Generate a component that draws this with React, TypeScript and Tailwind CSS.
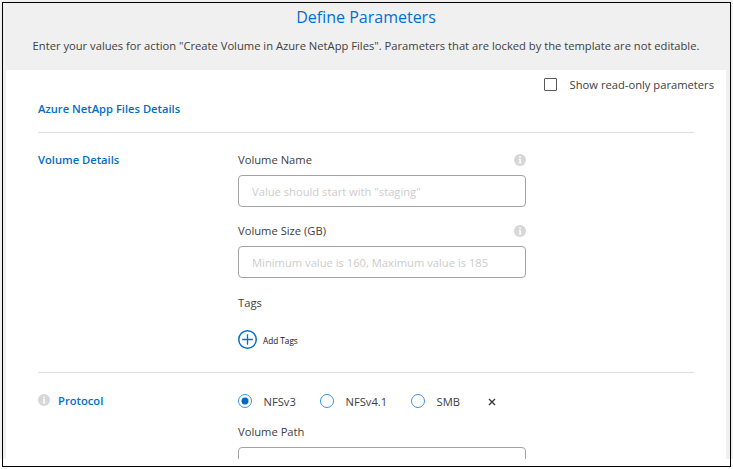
import React from "react";

function Info({ className = "" }: { className?: string }) {
  return (
    <svg className={`block h-3 w-3 shrink-0 ${className}`} viewBox="0 0 12 12">
      <circle cx="6" cy="6" r="6" fill="#d7d7d7" />
      <circle cx="6" cy="3.2" r="0.9" fill="#fff" />
      <path d="M4.9 5h1.9v3.5h.6v.9H4.7v-.9h.7V5.9h-.5z" fill="#fff" />
    </svg>
  );
}

function Field({ label, placeholder }: { label: string; placeholder: string }) {
  return (
    <div className="h-[71px] w-72">
      <div className="flex h-4 items-center justify-between">
        <label className="leading-4">{label}</label>
        <Info />
      </div>
      <input
        className="mt-[7px] block h-8 w-full rounded-[4px] border border-[#a3a3a3] bg-white px-[13px] pt-px text-[11.2px] outline-none placeholder:text-[#cccccc] placeholder:opacity-100"
        placeholder={placeholder}
      />
    </div>
  );
}

function Radio({ label, checked = false, className }: { label: string; checked?: boolean; className: string }) {
  return (
    <div className={`flex shrink-0 ${className}`}>
      <svg className="block h-3.5 w-3.5 shrink-0" viewBox="0 0 14 14">
        <circle cx="7" cy="7" r="6.5" fill="#fff" stroke="#3b92dc" />
        {checked && <circle cx="7" cy="7" r="3.5" fill="#0067c5" />}
      </svg>
      <span className="ml-[11.5px] leading-4">{label}</span>
    </div>
  );
}

export default function App() {
  return (
    <div className="relative h-[469px] w-[733px] overflow-hidden bg-white font-['Open_Sans','Noto_Sans',sans-serif] text-[11.2px] text-[#404040]">
      <div className="flex h-[459px] flex-col overflow-hidden bg-[#f0f0f0] pr-[7px] pl-1.5">
        <header className="h-[70px] shrink-0 text-center whitespace-nowrap">
          <h1 className="pt-[5px] text-[16px] leading-6 text-[#0070d2]">Define Parameters</h1>
          <p className="mt-[9px] leading-4">
            Enter your values for action "Create Volume in Azure NetApp Files". Parameters that are locked by the
            template are not editable.
          </p>
        </header>
        <main className="h-[389px] shrink-0 overflow-hidden bg-white px-8">
          <div className="-mr-5 flex h-[31px] items-start justify-end pt-[7px]">
            <span className="mt-px h-[13px] w-[13px] rounded-[1px] border border-[#5a5a5a]" />
            <span className="ml-[12.5px] leading-4">Show read-only parameters</span>
          </div>
          <h2 className="h-[31px] leading-4 font-semibold text-[#006dc9]">Azure NetApp Files Details</h2>
          <section className="flex h-60 border-t border-[#dddddd] pt-[19px]">
            <h2 className="w-50 shrink-0 leading-4 font-semibold text-[#006dc9]">Volume Details</h2>
            <div>
              <Field label="Volume Name" placeholder={'Value should start with "staging"'} />
              <Field label="Volume Size (GB)" placeholder="Minimum value is 160, Maximum value is 185" />
              <div className="pt-px leading-4">Tags</div>
              <div className="mt-[19px] flex h-[19px] items-center">
                <svg className="h-[19px] w-[19px]" viewBox="0 0 19 19" fill="none" stroke="#0070d2">
                  <circle cx="9.5" cy="9.5" r="8.75" strokeWidth="1.5" />
                  <path d="M9.5 4.2v10.6M4.2 9.5h10.6" strokeWidth="1.3" />
                </svg>
                <span className="ml-1.5 pt-[3px] text-[8.2px] leading-3 text-[#111]">Add Tags</span>
              </div>
            </div>
          </section>
          <section className="flex border-t border-[#dddddd] pt-[21px]">
            <div className="flex w-50 shrink-0">
              <Info />
              <h2 className="-mt-px ml-2 leading-4 font-semibold text-[#006dc9]">Protocol</h2>
            </div>
            <div className="w-72">
              <div className="flex h-[30px]">
                <Radio label="NFSv3" checked className="w-[82px]" />
                <Radio label="NFSv4.1" className="w-[91px]" />
                <Radio label="SMB" className="w-[77px]" />
                <svg className="mt-1 h-2 w-2" viewBox="0 0 8 8" stroke="#333" strokeWidth="1.3">
                  <path d="M1 1l6 6M7 1L1 7" />
                </svg>
              </div>
              <div className="leading-4">Volume Path</div>
              <div className="mt-[7px] h-8 rounded-[4px] border border-[#a3a3a3]" />
            </div>
          </section>
        </main>
      </div>
      <div className="pointer-events-none absolute top-0.5 right-0.5 bottom-0.5 left-0.5 border border-black" />
    </div>
  );
}
